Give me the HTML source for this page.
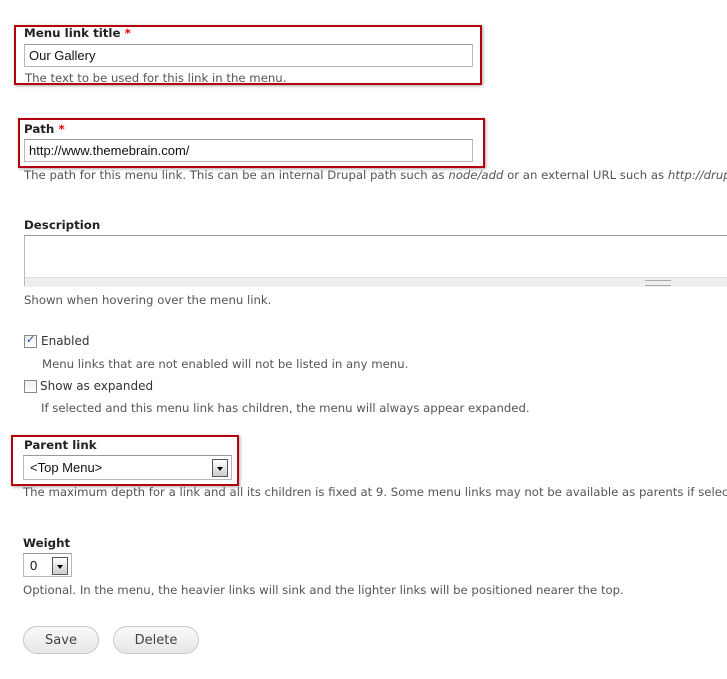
<!DOCTYPE html>
<html><head><style>
html,body{margin:0;width:727px;height:679px;overflow:hidden;background:#fff}
#w{position:relative;width:727px;height:679px;overflow:hidden;font-family:"DejaVu Sans","Liberation Sans",sans-serif}
.a{position:absolute;white-space:nowrap}
.lbl{font-weight:bold;font-size:11.8px;color:#222}
.lbl .r{color:#e00}
.d{font-size:11.7px;color:#555}
.red{position:absolute;border:2px solid #b5000e;box-shadow:1px 1px 3px rgba(0,0,0,.35)}
.in{position:absolute;border:1px solid #b8b8b8;border-top-color:#999;background:#fff;font-family:"Liberation Sans",sans-serif;font-size:13px;color:#111;box-sizing:border-box;padding:3px 4px}
.cb{position:absolute;width:11px;height:11px;border:1px solid #888;background:linear-gradient(#eee,#fff)}
.arr{position:absolute;width:16px;height:18px;border:1px solid #555;box-sizing:border-box;background:linear-gradient(#fff,#ccc)}
.arr:after{content:"";position:absolute;left:4px;top:7px;border:3.5px solid transparent;border-top:4px solid #000}
.btn{position:absolute;height:28px;border:1px solid #c8c8c8;border-radius:14px;background:linear-gradient(#fafafa,#e6e6e6);font-size:13px;color:#444;text-align:center;line-height:28px;box-sizing:border-box}
</style></head><body><div id="w">
<div class="red" style="left:14px;top:25px;width:464px;height:56px"></div>
<div class="a lbl" style="left:24px;top:26px">Menu link title <span class="r">*</span></div>
<div class="in" style="left:24px;top:44px;width:449px;height:23px">Our Gallery</div>
<div class="a d" style="left:25px;top:71px">The text to be used for this link in the menu.</div>

<div class="red" style="left:18px;top:118px;width:463px;height:46px"></div>
<div class="a lbl" style="left:24px;top:122px">Path <span class="r">*</span></div>
<div class="in" style="left:24px;top:139px;width:449px;height:23px">http://www.themebrain.com/</div>
<div class="a d" style="left:24px;top:168px">The path for this menu link. This can be an internal Drupal path such as <i>node/add</i> or an external URL such as <i>http://drupal.org</i>.</div>

<div class="a lbl" style="left:24px;top:218px">Description</div>
<div class="a" style="left:24px;top:235px;width:710px;height:51px;border:1px solid #b8b8b8;border-top-color:#999;box-sizing:border-box"></div>
<div class="a" style="left:25px;top:277px;width:710px;height:9px;background:#eee;border-top:1px solid #ddd"></div>
<div class="a" style="left:645px;top:280px;width:26px;height:4px;border-top:1px solid #aaa;border-bottom:1px solid #aaa"></div>
<div class="a d" style="left:24px;top:293px">Shown when hovering over the menu link.</div>

<div class="cb" style="left:24px;top:335px"><span style="position:absolute;left:1px;top:-3px;font-size:11px;color:#2a4a9a;font-weight:bold">✓</span></div>
<div class="a" style="left:41px;top:334px;font-size:12px;color:#333">Enabled</div>
<div class="a d" style="left:42px;top:357px">Menu links that are not enabled will not be listed in any menu.</div>
<div class="cb" style="left:24px;top:380px"></div>
<div class="a" style="left:40px;top:379px;font-size:12px;color:#333">Show as expanded</div>
<div class="a d" style="left:41px;top:401px">If selected and this menu link has children, the menu will always appear expanded.</div>

<div class="red" style="left:11px;top:435px;width:224px;height:47px"></div>
<div class="a lbl" style="left:24px;top:438px">Parent link</div>
<div class="in" style="left:23px;top:455px;width:209px;height:25px;padding:4px 6px">&lt;Top Menu&gt;</div>
<div class="arr" style="left:212px;top:459px"></div>
<div class="a d" style="left:23px;top:485px">The maximum depth for a link and all its children is fixed at 9. Some menu links may not be available as parents if selected.</div>

<div class="a lbl" style="left:23px;top:536px">Weight</div>
<div class="in" style="left:23px;top:553px;width:49px;height:24px;padding:4px 6px">0</div>
<div class="arr" style="left:52px;top:557px"></div>
<div class="a d" style="left:23px;top:583px">Optional. In the menu, the heavier links will sink and the lighter links will be positioned nearer the top.</div>

<div class="btn" style="left:23px;top:626px;width:76px">Save</div>
<div class="btn" style="left:113px;top:626px;width:86px">Delete</div>
</div></body></html>
